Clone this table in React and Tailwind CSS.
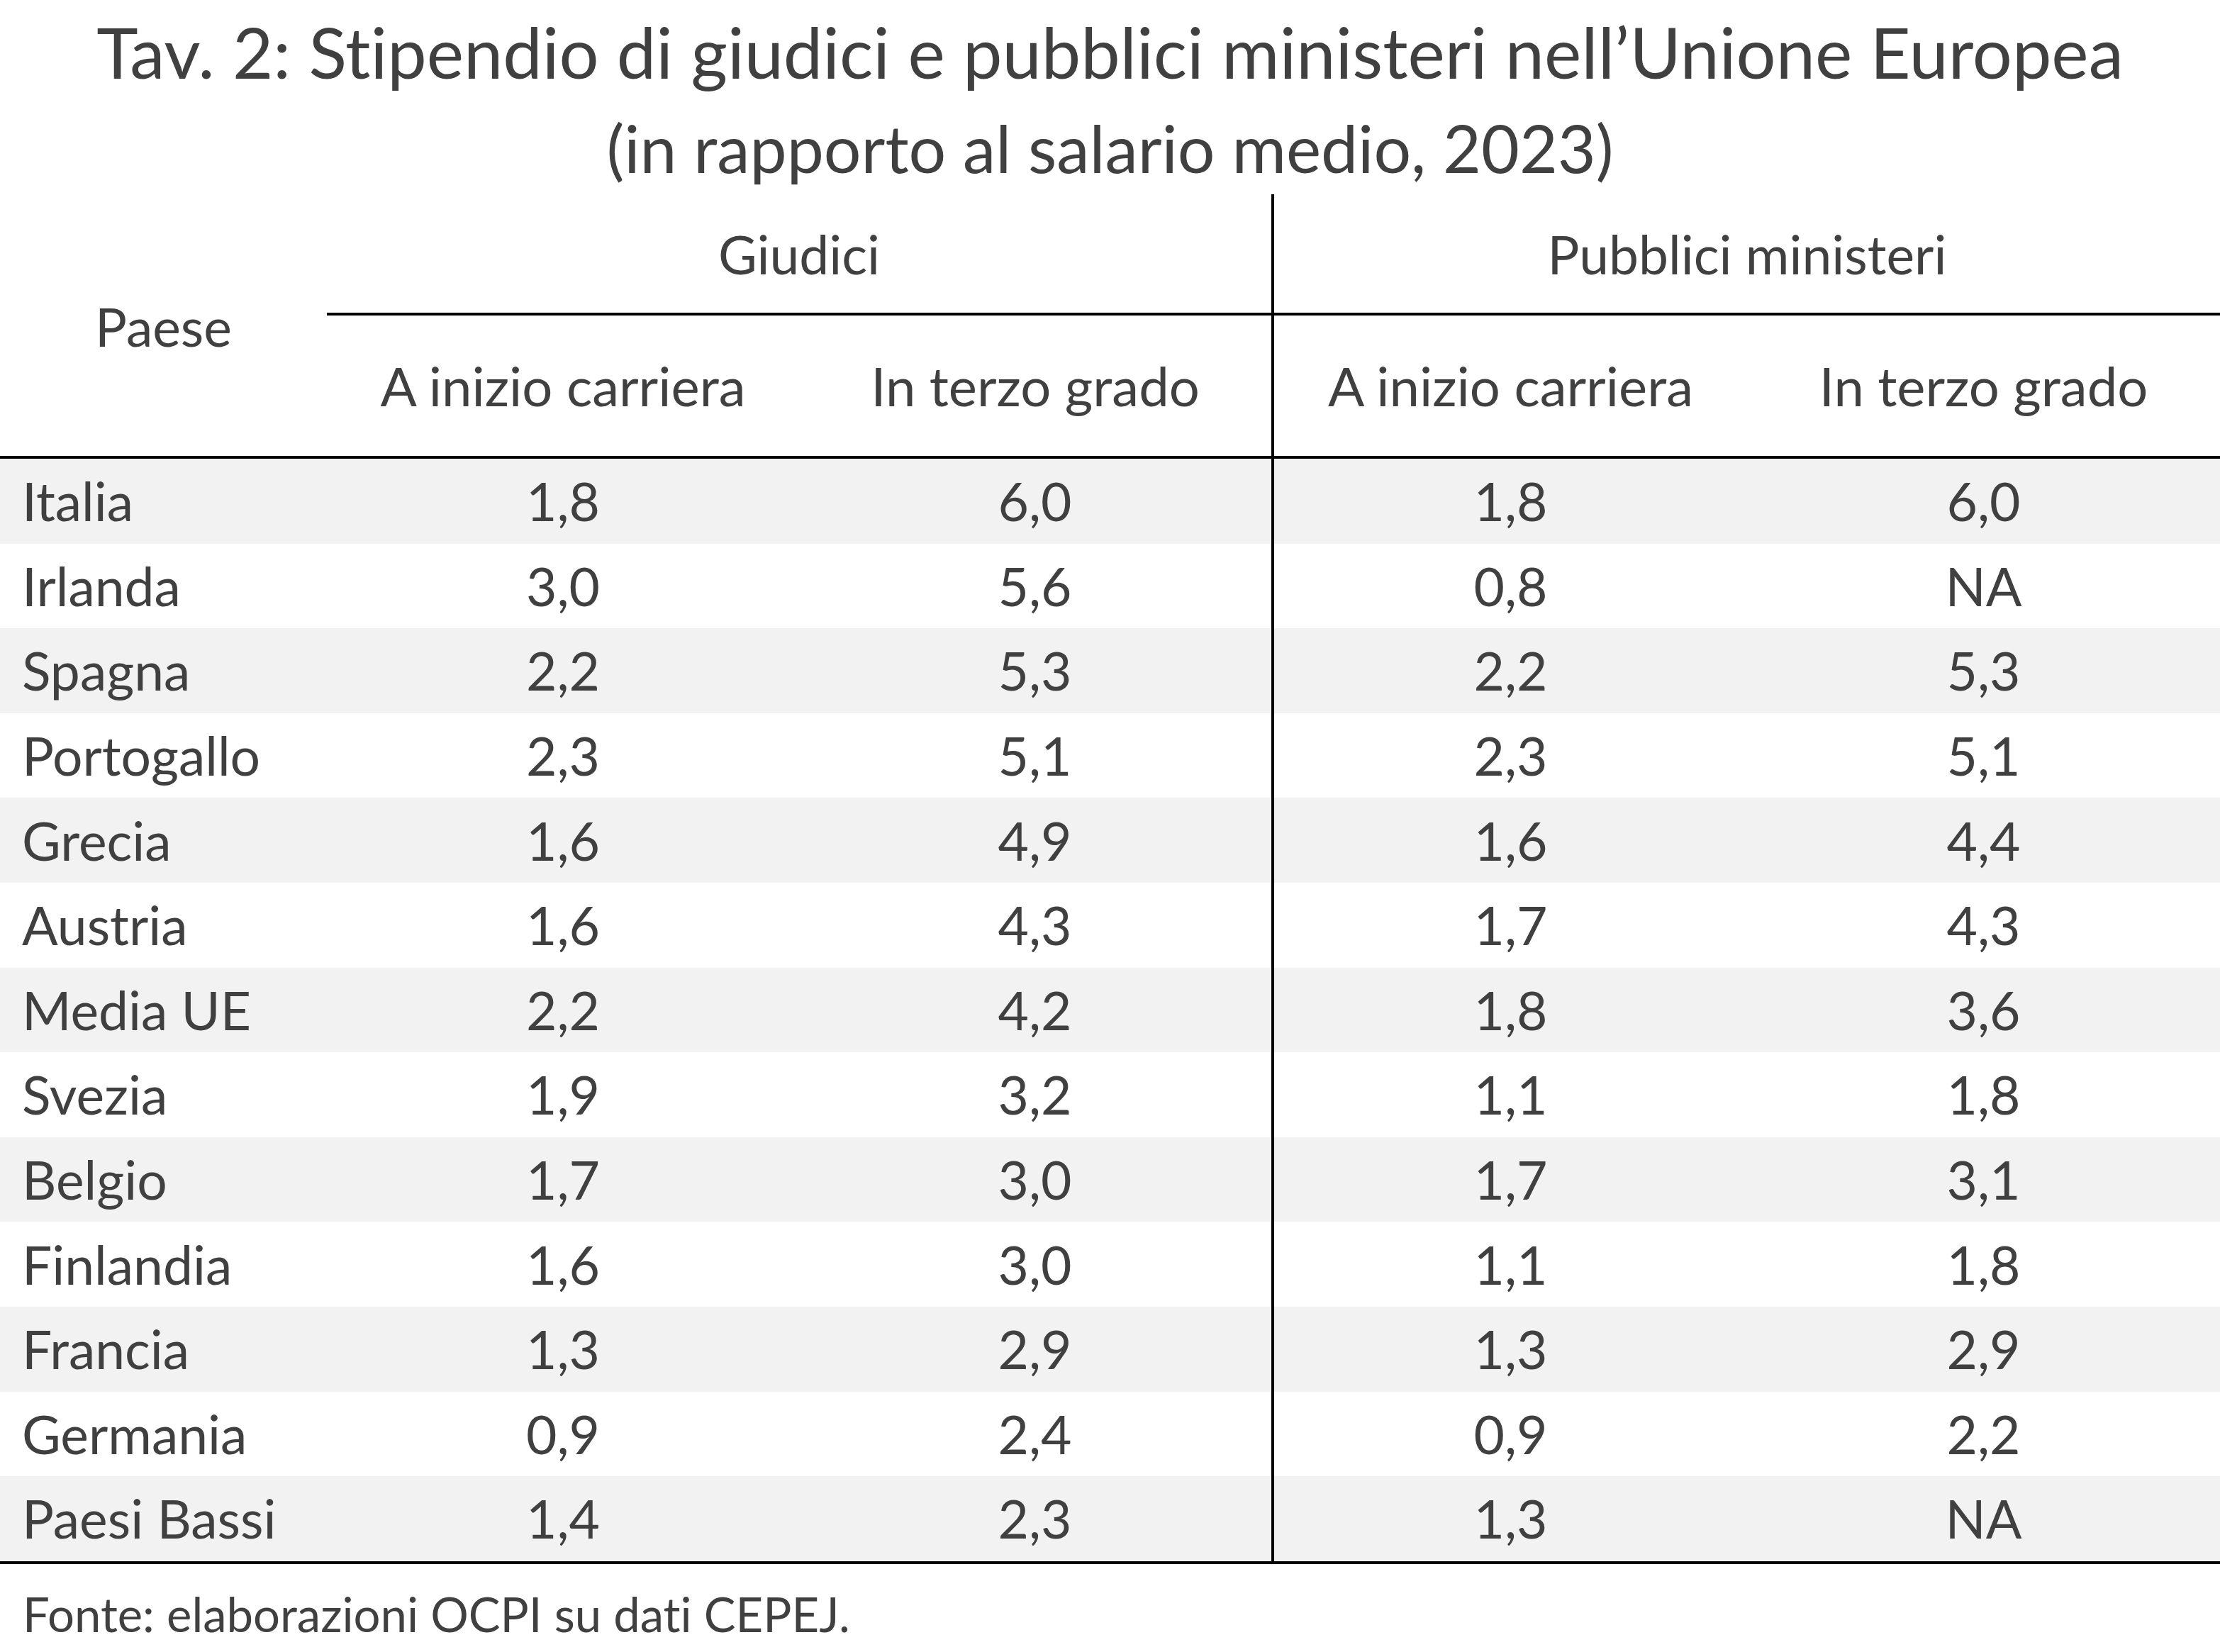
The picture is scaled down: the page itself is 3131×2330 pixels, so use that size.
const ROWS = [
  ["Italia", "1,8", "6,0", "1,8", "6,0"],
  ["Irlanda", "3,0", "5,6", "0,8", "NA"],
  ["Spagna", "2,2", "5,3", "2,2", "5,3"],
  ["Portogallo", "2,3", "5,1", "2,3", "5,1"],
  ["Grecia", "1,6", "4,9", "1,6", "4,4"],
  ["Austria", "1,6", "4,3", "1,7", "4,3"],
  ["Media UE", "2,2", "4,2", "1,8", "3,6"],
  ["Svezia", "1,9", "3,2", "1,1", "1,8"],
  ["Belgio", "1,7", "3,0", "1,7", "3,1"],
  ["Finlandia", "1,6", "3,0", "1,1", "1,8"],
  ["Francia", "1,3", "2,9", "1,3", "2,9"],
  ["Germania", "0,9", "2,4", "0,9", "2,2"],
  ["Paesi Bassi", "1,4", "2,3", "1,3", "NA"],
];

export default function App() {
  return (
    <div className="w-[3131px] h-[2330px] bg-white text-[#404040] font-['Lato',sans-serif] [font-variant-ligatures:none] overflow-hidden">
      {/* Title */}
      <div className="pt-[23px] text-center text-[99px] leading-none">
        Tav. 2: Stipendio di giudici e pubblici ministeri nell’Unione Europea
      </div>
      <div className="mt-[40px] text-center text-[93px] leading-none">
        (in rapporto al salario medio, 2023)
      </div>

      {/* Header */}
      <div className="mt-[19px] flex">
        <div className="w-[461px] flex items-center justify-center text-[75px] leading-none pt-[4px]">
          Paese
        </div>
        <div className="flex-1 flex flex-col">
          <div className="flex h-[167px] text-[75px] leading-none">
            <div className="w-[1332px] flex items-center justify-center pt-[2px]">Giudici</div>
            <div className="flex-1 border-l-4 border-black flex items-center justify-center pt-[2px]">
              Pubblici ministeri
            </div>
          </div>
          <div className="h-[4px] bg-black" />
          <div className="flex h-[198px] text-[76px] leading-none">
            <div className="w-[666px] flex items-center justify-center">A inizio carriera</div>
            <div className="w-[666px] flex items-center justify-center">In terzo grado</div>
            <div className="w-[671px] border-l-4 border-black flex items-center justify-center">A inizio carriera</div>
            <div className="flex-1 flex items-center justify-center">In terzo grado</div>
          </div>
        </div>
      </div>
      <div className="h-[4px] bg-black" />

      {/* Body */}
      <div className="flex flex-col">
        {ROWS.map((r, i) => (
          <div
            key={r[0]}
            className={`flex h-[119.6px] text-[75px] leading-none ${i % 2 === 0 ? "bg-[#f2f2f2]" : "bg-white"}`}
          >
            <div className="w-[461px] flex items-center pl-[31px]">{r[0]}</div>
            <div className="w-[666px] flex items-center justify-center">{r[1]}</div>
            <div className="w-[666px] border-r border-white flex items-center justify-center">{r[2]}</div>
            <div className="w-[671px] border-l-4 border-black flex items-center justify-center">{r[3]}</div>
            <div className="flex-1 flex items-center justify-center">{r[4]}</div>
          </div>
        ))}
      </div>
      <div className="h-[4px] bg-black" />

      {/* Footer */}
      <div className="mt-[37px] pl-[32px] text-[67px] leading-none">
        Fonte: elaborazioni OCPI su dati CEPEJ.
      </div>
    </div>
  );
}
